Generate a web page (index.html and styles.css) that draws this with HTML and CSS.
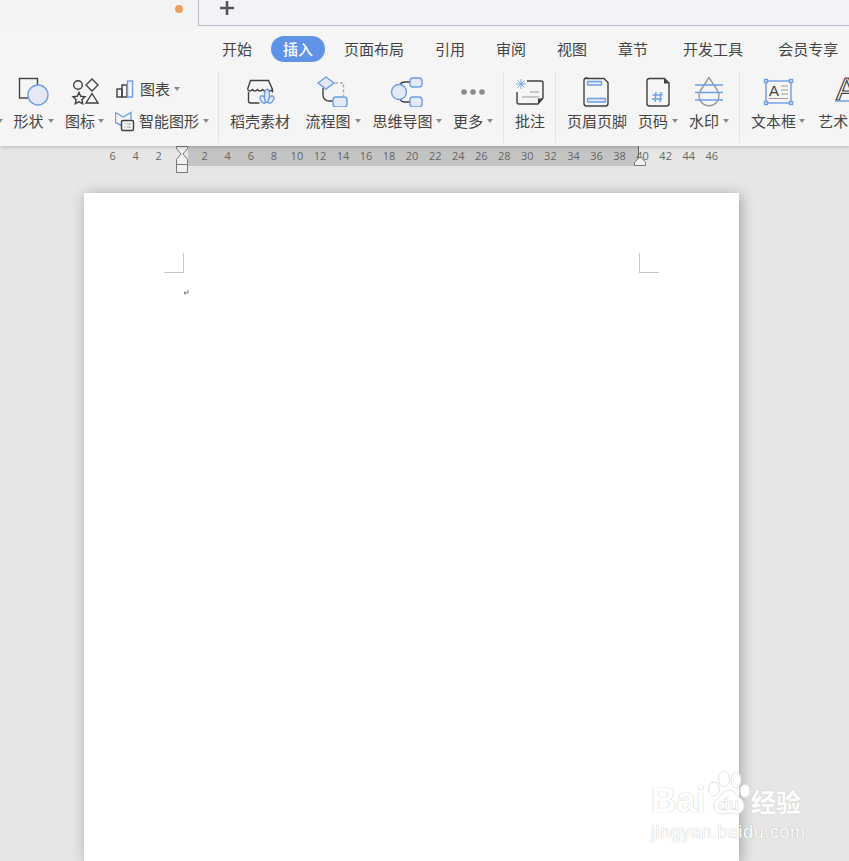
FILE: index.html
```html
<!DOCTYPE html>
<html lang="zh">
<head>
<meta charset="utf-8">
<title>WPS 文字</title>
<link rel="stylesheet" href="styles.css">
</head>
<body>
<div class="titlebar">
  <div class="title-left"><span class="dot"></span></div>
  <div class="title-right">
    <svg width="16" height="16" viewBox="0 0 16 16"><path d="M8 1v14M1 8h14" class="plus"/></svg>
  </div>
</div>
<nav class="tabs">
  <span class="tabdiv"></span>
  <span class="tab">开始</span>
  <span class="tab active">插入</span>
  <span class="tab">页面布局</span>
  <span class="tab">引用</span>
  <span class="tab">审阅</span>
  <span class="tab">视图</span>
  <span class="tab">章节</span>
  <span class="tab far">开发工具</span>
  <span class="tab far">会员专享</span>
</nav>
<section class="ribbon">
  <div class="stub"><i class="caret"></i></div>
  <div class="group first">
    <div class="item">
      <svg width="41" height="34" viewBox="13 73 41 34"><rect x="19.5" y="78.5" width="18" height="19.5" class="d"/><circle cx="38" cy="95" r="10" class="b"/></svg>
      <div class="label">形状<i class="caret"></i></div>
    </div>
    <div class="item">
      <svg width="39" height="34" viewBox="65 73 39 34"><circle cx="78" cy="85" r="4.3" class="d"/><path d="M92 79l6 6-6 6-6-6z" class="d"/><path d="M79 92.5l1.8 3.8 4.2.5-3.1 2.9.8 4.1-3.7-2-3.7 2 .8-4.1-3.1-2.9 4.2-.5z" class="d"/><path d="M92 93.5l6 9.5H86z" class="d"/></svg>
      <div class="label">图标<i class="caret tight"></i></div>
    </div>
    <div class="col">
      <div class="row">
        <svg width="20" height="22" viewBox="115 77 20 22"><rect x="117" y="88" width="5" height="8" class="d"/><rect x="122" y="84" width="5" height="12" class="d"/><rect x="127.5" y="80" width="5" height="16" class="bo"/></svg>
        <span class="label">图表<i class="caret"></i></span>
      </div>
      <div class="row snug">
        <svg width="20" height="22" viewBox="115 108 20 22"><path d="M115.500 110.500l8 4.500 7.500-4.500v7M115.500 110.500v10l6 3" class="bo"/><rect x="121.500" y="118.500" width="12" height="10" rx="1.500" class="dw"/><path d="M124.500 122h1M124.500 125h1M127 122h4M127 125h4" class="g"/></svg>
        <span class="label">智能图形<i class="caret"></i></span>
      </div>
    </div>
  </div>
  <div class="group">
    <div class="item wide">
      <svg width="60" height="34" viewBox="230 73 60 34"><path d="M247.500 89.500l3-9h18l4 9v3M247.500 89.500q2.500 3 5 0q2.500 3 5 0q2.500 3 5 0q2.500 3 5 0q2.500 3 5 0M248.500 92v9a2 2 0 0 0 2 2h9" class="d"/><ellipse cx="263" cy="99.500" rx="2.300" ry="4" class="b" transform="rotate(-25 263 99.500)"/><ellipse cx="267" cy="96" rx="2.500" ry="6.500" class="b"/><ellipse cx="271" cy="99.500" rx="2.300" ry="4" class="b" transform="rotate(30 271 99.500)"/></svg>
      <div class="label">稻壳素材</div>
    </div>
    <div class="item">
      <svg width="56" height="34" viewBox="305 73 56 34"><path d="M323 88v7a6 6 0 0 0 6 6h4" class="d"/><path d="M335 83h8.500v13" class="dash"/><path d="M326 77l8 6-8 6-8-6z" class="b"/><rect x="333" y="97" width="14" height="10" rx="3" class="b"/></svg>
      <div class="label">流程图<i class="caret"></i></div>
    </div>
    <div class="item">
      <svg width="70" height="34" viewBox="372 73 70 34"><path d="M400 85q1-3 5-3h5M400 99q1 3 5 3h5" class="d"/><circle cx="399" cy="92" r="7.500" class="b"/><rect x="410" y="78" width="12" height="9" rx="3" class="b"/><rect x="410" y="97" width="12" height="10" rx="3" class="b"/></svg>
      <div class="label">思维导图<i class="caret tight"></i></div>
    </div>
    <div class="item">
      <svg width="40" height="34" viewBox="453 73 40 34"><circle cx="464" cy="92" r="2.800" class="m"/><circle cx="473" cy="92" r="2.800" class="m"/><circle cx="482" cy="92" r="2.800" class="m"/></svg>
      <div class="label">更多<i class="caret"></i></div>
    </div>
  </div>
  <div class="group">
    <div class="item">
      <svg width="30" height="34" viewBox="515 73 30 34"><path d="M527 81h14a2 2 0 0 1 2 2v15l-5 6h-19a2 2 0 0 1-2-2V92" class="d"/><path d="M543 98.500h-5v5.500z" class="fill-d"/><path d="M530 92h9M522 97h17" class="g"/><path d="M521 79v10M516 84h10M517.500 80.500l7 7M524.500 80.500l-7 7" class="thin"/></svg>
      <div class="label">批注</div>
    </div>
  </div>
  <div class="group">
    <div class="item">
      <svg width="60" height="34" viewBox="567 73 60 34"><path d="M586 78.500h18l4 4v21a2.500 2.500 0 0 1-2.500 2.500h-19a2.500 2.500 0 0 1-2.500-2.500v-23a2.500 2.500 0 0 1 2.500-2.500z" class="d"/><rect x="587.500" y="81.500" width="14" height="3.500" rx=".5" class="b"/><rect x="587.500" y="98.500" width="18" height="3.500" rx=".5" class="b"/></svg>
      <div class="label">页眉页脚</div>
    </div>
    <div class="item">
      <svg width="40" height="34" viewBox="638 73 40 34"><path d="M649.500 78.500h15l4.500 4.500v20.500a2.500 2.500 0 0 1-2.500 2.500h-17a2.500 2.500 0 0 1-2.500-2.500v-22.500a2.500 2.500 0 0 1 2.500-2.500z" class="d"/><path d="M664 78.500v5h5z" class="fill-d"/><path d="M656 92l-1 10M661 92l-1 10M652.500 95h10M652 99h10" class="bo"/></svg>
      <div class="label">页码<i class="caret"></i></div>
    </div>
    <div class="item">
      <svg width="40" height="34" viewBox="689 73 40 34"><path d="M709 77.500l-8.500 13a10 10 0 1 0 17 0z" class="m-line"/><path d="M695 85h28M695 92.500h28M695 100h28" class="bo"/></svg>
      <div class="label">水印<i class="caret"></i></div>
    </div>
  </div>
  <div class="group">
    <div class="item">
      <svg width="54" height="34" viewBox="751 73 54 34"><rect x="766" y="81" width="25" height="22" class="bo"/><rect x="764.500" y="79.500" width="3" height="3" class="b"/><rect x="789.500" y="79.500" width="3" height="3" class="b"/><rect x="764.500" y="101.500" width="3" height="3" class="b"/><rect x="789.500" y="101.500" width="3" height="3" class="b"/><text x="769" y="96" class="svgtext">A</text><path d="M781 86h7M781 90h7M781 94h7M769 98.500h19" class="g"/></svg>
      <div class="label">文本框<i class="caret tight"></i></div>
    </div>
    <div class="item art">
      <svg width="45" height="34" viewBox="818 73 45 34"><text x="831" y="100" class="svgart">A</text><path d="M830 101h33" class="bo"/></svg>
      <div class="label">艺术字<i class="caret"></i></div>
    </div>
  </div>
</section>
<main class="workspace">
  <div class="ruler">
    <span class="range"></span>
    <svg class="hourglass" width="12" height="27" viewBox="0 0 12 27"><path d="M.500.500h11v2L7 8l4.500 5.500v5H.500v-5L5 8 .500 2.500zM.500 18.500v8h11v-8" class="marker"/></svg>
    <svg class="house" width="12" height="9" viewBox="0 0 12 9"><path d="M.500 8.500v-3L5.500.500h2l4 5v3z" class="marker"/></svg>
    <span class="tick">6</span><span class="tick">4</span><span class="tick">2</span><span class="tick"></span>
    <span class="tick">2</span><span class="tick">4</span><span class="tick">6</span><span class="tick">8</span><span class="tick">10</span><span class="tick">12</span><span class="tick">14</span><span class="tick">16</span><span class="tick">18</span><span class="tick">20</span><span class="tick">22</span><span class="tick">24</span><span class="tick">26</span><span class="tick">28</span><span class="tick">30</span><span class="tick">32</span><span class="tick">34</span><span class="tick">36</span><span class="tick">38</span><span class="tick">40</span><span class="tick">42</span><span class="tick">44</span><span class="tick">46</span>
  </div>
  <article class="page">
    <div class="marks"><span class="mark ml"></span><span class="mark mr"></span></div>
    <svg class="para" width="6" height="5" viewBox="0 0 6 5"><path d="M5 0v3H1M2.500 1.500L1 3l1.500 1.500" class="pm"/></svg>
  </article>
</main>
<aside class="wm">
  <div class="wm-top">
    <span class="wm-bai">Bai</span>
    <svg class="wm-paw" width="52" height="50" viewBox="0 0 52 50"><ellipse cx="12" cy="20" rx="5.500" ry="7" class="paw"/><ellipse cx="22" cy="10" rx="5.500" ry="8" class="paw"/><ellipse cx="34" cy="11" rx="5" ry="8" class="paw"/><ellipse cx="43" cy="22" rx="5" ry="6.500" class="paw"/><path d="M27 21c6 0 8 6 12 9 6 5 3 15-5 15-3 0-5-1-7-1s-4 1-7 1c-8 0-11-10-5-15 4-3 6-9 12-9z" class="paw"/><text x="16" y="41" class="pawtext">du</text></svg>
    <span class="wm-cn">经验</span>
  </div>
  <div class="wm-url">jingyan.baidu.com</div>
</aside>
</body>
</html>
```
FILE: styles.css
```css
* { box-sizing: border-box; }
html, body { margin: 0; height: 861px; overflow: hidden; }
body {
  position: relative;
  width: 849px;
  background: #e6e6e6;
  font-family: "Noto Sans CJK SC", "Noto Sans", sans-serif;
  color: #444;
}
svg { display: block; flex-shrink: 0; }

.titlebar { display: flex; height: 26px; background: #f3f3f3; }
.title-left { width: 198px; display: flex; justify-content: flex-end; padding: 5px 15px 0 0; }
.dot { width: 8px; height: 8px; border-radius: 50%; background: #e8a160; }
.title-right {
  flex: 1;
  background: #f2f3f7;
  border-left: 1px solid #b9bdca;
  border-bottom: 1px solid #b9bdca;
  padding: 0 0 0 20px;
}
.plus { fill: none; stroke: #555; stroke-width: 2.6; }

.tabs {
  position: relative;
  z-index: 3;
  display: flex;
  align-items: center;
  gap: 7px;
  height: 44px;
  padding: 10px 0 8px 3px;
  background: #f5f5f5;
}
.tabdiv { width: 1px; height: 30px; background: #e2e2e2; margin-right: 200px; }
.tab {
  flex-shrink: 0;
  height: 26px;
  padding: 0 12px;
  font-size: 15px;
  line-height: 26px;
  white-space: nowrap;
}
.tab.far { margin-left: 4px; }
.tab.active { background: #5f93e8; color: #fff; border-radius: 13px; font-weight: 500; }

.ribbon {
  position: relative;
  z-index: 2;
  display: flex;
  height: 76px;
  padding: 2px 0 3px;
  background: #f5f5f5;
  box-shadow: 0 1px 4px rgba(0, 0, 0, .22);
}
.stub { width: 13px; flex-shrink: 0; display: flex; align-items: flex-end; padding-bottom: 20px; overflow: hidden; }
.stub .caret { margin-left: -3px; }
.group {
  display: flex;
  flex-shrink: 0;
  gap: 11px;
  padding: 1px 10px 0 11px;
  border-left: 1px solid #e3e3e3;
}
.group.first { border-left: 0; padding: 1px 8px 0 0; }
.item { display: flex; flex-direction: column; align-items: center; flex-shrink: 0; }
.item.wide { margin-right: 4px; }
.item.art { margin-left: 2px; }
.label {
  display: flex;
  align-items: center;
  height: 20px;
  margin-top: 4px;
  font-size: 15px;
  line-height: 20px;
  white-space: nowrap;
}
.col { display: flex; flex-direction: column; width: 95px; }
.row { display: flex; align-items: center; gap: 5px; height: 32px; }
.row.snug { gap: 4px; }
.row .label { margin-top: 0; }
.caret {
  display: inline-block;
  width: 0;
  height: 0;
  margin-left: 4px;
  border: 3px solid transparent;
  border-top: 4px solid #8a8a8a;
  border-bottom: 0;
}
.caret.tight { margin-left: 3px; }

.d { fill: none; stroke: #404040; stroke-width: 1.4; }
.dw { fill: #f5f5f5; stroke: #404040; stroke-width: 1.4; }
.b { fill: #e4eaf5; stroke: #6f9de6; stroke-width: 1.4; }
.bo { fill: none; stroke: #6f9de6; stroke-width: 1.4; }
.thin { fill: none; stroke: #6f9de6; stroke-width: .9; }
.g { fill: none; stroke: #9a9a9a; stroke-width: 1.2; }
.m { fill: #8a8a8a; }
.m-line { fill: none; stroke: #9a9a9a; stroke-width: 1.4; }
.fill-d { fill: #404040; }
.dash { fill: none; stroke: #a8a8a8; stroke-width: 1.4; stroke-dasharray: 3 2; }
.svgtext { font-family: "Liberation Sans", sans-serif; font-size: 15px; fill: #404040; }
.svgart { font-family: "Liberation Sans", sans-serif; font-size: 32px; fill: #fff; stroke: #404040; stroke-width: 1.2; }

.workspace { display: flex; flex-direction: column; }
.ruler {
  position: relative;
  display: flex;
  height: 20px;
  padding-left: 101px;
  font-family: "Open Sans", "Liberation Sans", sans-serif;
  font-size: 11px;
  line-height: 20px;
  color: #666;
}
.range {
  position: absolute;
  left: 188px;
  top: 0;
  width: 451px;
  height: 20px;
  background: #c4c4c4;
  border-right: 1px solid #666;
}
.tick { position: relative; width: 23.05px; text-align: center; flex-shrink: 0; }
.hourglass { position: absolute; z-index: 1; left: 176px; top: 0; }
.house { position: absolute; z-index: 1; left: 634px; top: 11px; }
.marker { fill: #f0f0f0; stroke: #777; stroke-width: 1; }

.page {
  width: 655px;
  height: 668px;
  margin: 27px 0 0 84px;
  padding: 60px 80px 0;
  background: #fff;
  box-shadow: 2px 2px 13px rgba(0, 0, 0, .3);
}
.marks { display: flex; justify-content: space-between; }
.mark { width: 20px; height: 20px; border-bottom: 1px solid #c6c6c6; }
.ml { border-right: 1px solid #c6c6c6; }
.mr { border-left: 1px solid #c6c6c6; }
.para { margin: 17px 0 0 19px; }
.pm { fill: none; stroke: #555; stroke-width: .8; }

.wm {
  position: absolute;
  z-index: 3;
  left: 651px;
  top: 767px;
  color: #fff;
  font-family: "Liberation Sans", sans-serif;
}
.wm-top { display: flex; align-items: flex-end; height: 52px; }
.wm-bai {
  width: 56px;
  margin-bottom: 1px;
  font-size: 35px;
  line-height: 36px;
  font-weight: 700;
  text-shadow: 0 0 1px rgba(0, 0, 0, .35);
}
.wm-paw { margin-left: -5px; }
.paw { fill: #fff; stroke: #e2e2e2; stroke-width: 1; }
.pawtext { font-family: "Liberation Sans", sans-serif; font-size: 17px; font-weight: 700; fill: #fff; stroke: #d4d4d4; stroke-width: .5; }
.wm-cn {
  margin: 0 0 3px -3px;
  font-family: "Noto Sans CJK SC", sans-serif;
  font-size: 25px;
  line-height: 30px;
  font-weight: 700;
  text-shadow: 0 0 1px rgba(0, 0, 0, .2);
}
.wm-url {
  margin-top: 2px;
  font-size: 18px;
  line-height: 22px;
  letter-spacing: .55px;
  text-shadow: 0 0 1px rgba(0, 0, 0, .35);
}
```
